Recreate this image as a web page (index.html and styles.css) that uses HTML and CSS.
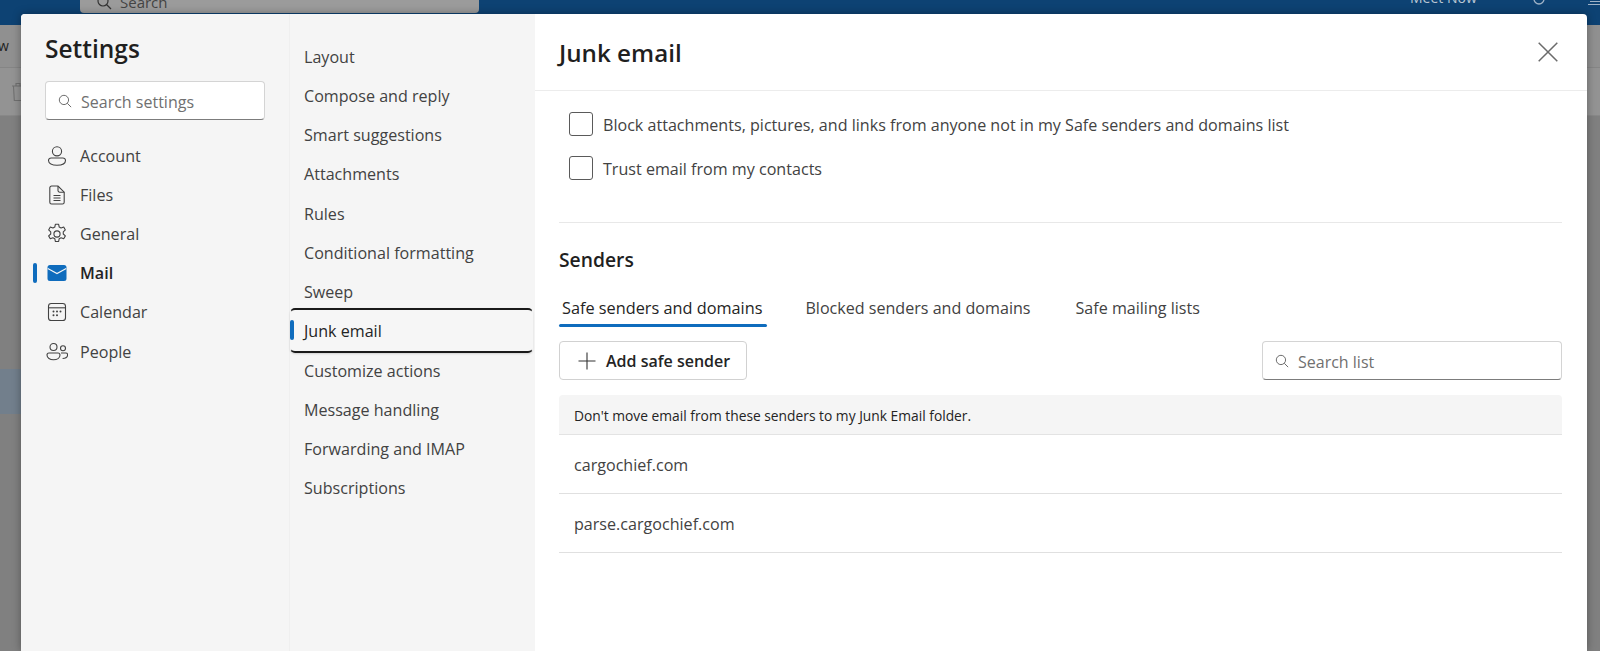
FILE: index.html
```html
<!DOCTYPE html>
<html lang="en">
<head>
<meta charset="utf-8">
<title>Settings</title>
<link rel="stylesheet" href="styles.css">
</head>
<body>
<div class="backdrop">
  <div class="topbar">
    <div class="appsearch"><svg class="ic16" viewBox="0 0 16 16"><circle cx="7" cy="6" r="5" fill="none" stroke="#333" stroke-width="1.2"/><path d="M10.500 9.500 15 14" stroke="#333" stroke-width="1.200"/></svg><span>Search</span></div>
    <span class="meetnow">Meet Now</span>
    <svg class="top-ring" viewBox="0 0 12 12"><circle cx="6" cy="-1" r="5" fill="none" stroke="#9fb2c6" stroke-width="1.300"/></svg>
    <svg class="top-edge" viewBox="0 0 13 6"><path d="M1 4.500h12M3 1.500h10" stroke="#9fb2c6" stroke-width="1.200" fill="none"/></svg>
  </div>
  <div class="ribbon"><span class="ribbon-v">w</span></div>
  <div class="toolrow"><svg class="trash" viewBox="0 0 14 20"><path d="M1 4h12M5 4V1.500h4V4M2.500 4l.8 14.500h7.400L11.500 4" fill="none" stroke="#707070" stroke-width="1.100"/></svg></div>
  <div class="backlist"><div class="selected-mail"></div></div>
</div>
<div class="dialog">
  <aside class="nav">
    <h1 class="nav-title">Settings</h1>
    <div class="search nav-search">
      <svg class="ic14" viewBox="0 0 16 16"><circle cx="6.800" cy="6.800" r="5.300" fill="none" stroke="#666" stroke-width="1.100"/><path d="M10.600 10.600 15 15" stroke="#666" stroke-width="1.100"/></svg>
      <span class="search-text">Search settings</span>
    </div>
    <ul class="nav-list">
      <li class="nav-item"><svg class="ic20" viewBox="0 0 20 20" fill="none" stroke="#424242" stroke-width="1.100"><circle cx="10" cy="5.300" r="4.600"/><path d="M4.200 12h11.600a2.600 2.600 0 0 1 2.700 2.600c0 2.900-3.600 4.700-8.500 4.700s-8.500-1.800-8.500-4.700A2.600 2.600 0 0 1 4.200 12z"/></svg>Account</li>
      <li class="nav-item"><svg class="ic20" viewBox="0 0 20 20" fill="none" stroke="#424242" stroke-width="1.100"><path d="M2.800 2.800A1.800 1.800 0 0 1 4.600 1H11l6.200 6.200v10A1.800 1.800 0 0 1 15.400 19H4.600a1.800 1.800 0 0 1-1.800-1.800z"/><path d="M11 1v4.500A1.700 1.700 0 0 0 12.700 7.200h4.500M6.500 10.500h7M6.500 13h7M6.500 15.500h7"/></svg>Files</li>
      <li class="nav-item"><svg class="ic20 ic-gear" viewBox="0 0 20 20" fill="none" stroke="#424242" stroke-width="1"><circle cx="10" cy="10" r="2.800"/><path d="M8.500 1.200h3l.5 2.500 1.700.9 2.400-.9 1.500 2.600-1.900 1.700v2l1.900 1.700-1.500 2.600-2.400-.9-1.700.9-.5 2.500h-3l-.5-2.500-1.700-.9-2.400.9-1.500-2.600 1.900-1.700V8L2.400 6.300l1.500-2.600 2.400.9L8 3.700z" stroke-linejoin="round"/></svg>General</li>
      <li class="nav-item nav-item-active"><span class="marker"></span><svg class="ic20" viewBox="0 0 20 20"><path d="M.5 4.500A2.500 2.500 0 0 1 3 2h14a2.500 2.500 0 0 1 2.500 2.500v11A2.500 2.500 0 0 1 17 18H3a2.500 2.500 0 0 1-2.500-2.500z" fill="#0f6cbd"/><path d="M.8 5.500 10 10.500l9.200-5" fill="none" stroke="#f5f5f5" stroke-width="1.100"/></svg>Mail</li>
      <li class="nav-item"><svg class="ic20" viewBox="0 0 20 20" fill="none" stroke="#424242" stroke-width="1.100"><rect x="1.500" y="1.500" width="17" height="17" rx="2.800"/><path d="M1.500 5.800h17"/><g fill="#424242" stroke="none"><circle cx="6.500" cy="9.500" r="1"/><circle cx="10" cy="9.500" r="1"/><circle cx="13.500" cy="9.500" r="1"/><circle cx="6.500" cy="13.200" r="1"/><circle cx="10" cy="13.200" r="1"/></g></svg>Calendar</li>
      <li class="nav-item"><svg class="ic20 ic-people" viewBox="0 0 22 20" fill="none" stroke="#424242" stroke-width="1.100"><circle cx="7.500" cy="5" r="3.500"/><circle cx="17" cy="6.300" r="2.500"/><path d="M3 11h9a2 2 0 0 1 2 2c0 3-3 4.800-6.500 4.800S1 16 1 13a2 2 0 0 1 2-2zM15 11h4.800a1.800 1.800 0 0 1 1.800 1.800c0 2.200-1.900 3.700-5 3.700"/></svg>People</li>
    </ul>
  </aside>
  <nav class="sub">
    <ul class="sub-list">
      <li class="sub-item">Layout</li>
      <li class="sub-item">Compose and reply</li>
      <li class="sub-item">Smart suggestions</li>
      <li class="sub-item">Attachments</li>
      <li class="sub-item">Rules</li>
      <li class="sub-item">Conditional formatting</li>
      <li class="sub-item">Sweep</li>
      <li class="sub-item sub-item-active"><span class="marker"></span>Junk email</li>
      <li class="sub-item">Customize actions</li>
      <li class="sub-item">Message handling</li>
      <li class="sub-item">Forwarding and IMAP</li>
      <li class="sub-item">Subscriptions</li>
    </ul>
  </nav>
  <main class="content">
    <header class="content-head">
      <h2 class="content-title">Junk email</h2>
      <svg class="close" viewBox="0 0 20 20"><path d="M.7.7 19.300 19.300M19.300.7.7 19.300" stroke="#6b6b6b" stroke-width="1.500" fill="none"/></svg>
    </header>
    <div class="content-body">
      <div class="checks">
        <label class="check"><span class="box"></span><span class="check-text">Block attachments, pictures, and links from anyone not in my Safe senders and domains list</span></label>
        <label class="check"><span class="box"></span><span class="check-text">Trust email from my contacts</span></label>
      </div>
      <h3 class="section-title">Senders</h3>
      <div class="tabs">
        <span class="tab tab-active">Safe senders and domains</span>
        <span class="tab">Blocked senders and domains</span>
        <span class="tab">Safe mailing lists</span>
      </div>
      <div class="actions">
        <button class="add-btn"><svg class="ic18" viewBox="0 0 18 18"><path d="M9 .5v17M.5 9h17" stroke="#333" stroke-width="1.100" fill="none"/></svg>Add safe sender</button>
        <div class="search list-search">
          <svg class="ic14" viewBox="0 0 16 16"><circle cx="6.800" cy="6.800" r="5.300" fill="none" stroke="#666" stroke-width="1.100"/><path d="M10.600 10.600 15 15" stroke="#666" stroke-width="1.100"/></svg>
          <span class="search-text">Search list</span>
        </div>
      </div>
      <div class="list-head">Don't move email from these senders to my Junk Email folder.</div>
      <div class="list-row">cargochief.com</div>
      <div class="list-row">parse.cargochief.com</div>
    </div>
  </main>
</div>
</body>
</html>
```
FILE: styles.css
```css
* { box-sizing: border-box; }
html, body { margin: 0; height: 100%; overflow: hidden; }
body { font-family: "Open Sans", "Noto Sans", sans-serif; background: #808080; color: #242424; }
ul { list-style: none; margin: 0; padding: 0; }
h1, h2, h3 { margin: 0; font-weight: 600; }

.backdrop { height: 651px; display: flex; flex-direction: column; }
.topbar { height: 25px; background: #0d4273; display: flex; align-items: flex-start; flex: none; position: relative; color: #b9c6d3; }
.appsearch { width: 399px; height: 13px; margin-left: 80px; background: #9b9b9b; border-radius: 0 0 4px 4px; display: flex; gap: 8px; padding-left: 16px; font-size: 15px; line-height: 1; color: #444; overflow: hidden; align-items: flex-end; }
.appsearch .ic16 { width: 16px; height: 16px; flex: none; margin-bottom: 2px; }
.appsearch span { margin-bottom: 3px; }
.meetnow { font-size: 14px; line-height: 1; position: absolute; left: 1410px; top: -9px; }
.top-ring { position: absolute; left: 1533px; top: 0; width: 12px; height: 12px; }
.top-edge { position: absolute; left: 1587px; top: 0; width: 13px; height: 6px; }
.ribbon { height: 43px; background: #909090; border-bottom: 1px solid #858585; flex: none; font-size: 14px; color: #222; padding-top: 11px; }
.ribbon-v { display: block; margin-left: -2px; }
.toolrow { height: 48px; background: #939393; border-bottom: 1px solid #888; flex: none; padding: 14px 0 0 11px; }
.trash { display: block; width: 14px; height: 20px; }
.backlist { flex: 1; background: #808080; padding-top: 253px; }
.selected-mail { height: 45px; width: 21px; background: #727f8c; }

.dialog { position: absolute; left: 21px; top: 14px; width: 1566px; height: 637px; background: #fff; border-radius: 4px 4px 0 0; display: flex; overflow: hidden; box-shadow: 0 0 8px rgba(0, 0, 0, .35); }

.nav { width: 269px; flex: none; background: #f5f5f5; border-right: 1px solid #efefef; padding: 18px 24px 0 24px; }
.nav-title { font-size: 24.500px; line-height: 34px; font-weight: 600; color: #1f1f1f; }
.search { display: flex; align-items: center; background: #fff; border: 1px solid #d4d4d4; border-bottom-color: #7c7c7c; border-radius: 4px; color: #707070; font-size: 16px; }
.search-text { margin-top: 2px; }
.nav-search { width: 220px; height: 39px; margin-top: 15px; padding-left: 12px; gap: 9px; }
.ic14 { width: 14px; height: 14px; flex: none; }
.nav-list { margin-top: 16px; }
.nav-item { position: relative; height: 39.200px; display: flex; align-items: center; gap: 13px; font-size: 16.100px; color: #424242; padding-left: 2px; }
.ic20 { width: 20px; height: 20px; flex: none; }
.ic-gear { width: 22px; height: 22px; margin: 0 -1px; }
.ic-people { width: 22px; margin: 0 -1px; }
.nav-item-active { font-weight: 600; color: #242424; }
.marker { position: absolute; width: 4px; height: 20px; background: #0f6cbd; border-radius: 2px; }
.nav-item-active .marker { left: -12px; top: 9px; }

.sub { width: 245px; flex: none; background: #f5f5f5; padding-top: 23px; }
.sub-item { position: relative; height: 39.250px; display: flex; align-items: center; padding-left: 14px; font-size: 16.100px; color: #424242; white-space: nowrap; }
.sub-item-active { height: 45.250px; margin: -4px 0 -2px; padding-top: 2px; width: 243px; padding-left: 13px; color: #242424; border-radius: 5px; border: 2px solid #1a1a1a; border-left: 1px solid transparent; border-right: 1px solid transparent; background: #f6f6f6; box-shadow: 0 1px 2px rgba(0, 0, 0, .15); }
.sub-item-active .marker { left: -1px; top: 10px; }

.content { flex: 1; min-width: 0; display: flex; flex-direction: column; }
.content-head { height: 77px; border-bottom: 1px solid #ececec; display: flex; align-items: center; justify-content: space-between; padding: 0 29px 0 24px; flex: none; }
.content-title { font-size: 24.200px; line-height: 32px; color: #1f1f1f; margin-top: 1px; }
.close { width: 20px; height: 20px; flex: none; margin-bottom: 1px; }
.content-body { padding: 0 25px 0 24px; }
.checks { height: 132px; border-bottom: 1px solid #e8e8e8; padding: 21px 0 0 10px; display: flex; flex-direction: column; gap: 20px; }
.check { display: flex; align-items: center; gap: 10px; height: 24px; font-size: 16.100px; color: #424242; white-space: nowrap; }
.check-text { margin-top: 2px; }
.box { width: 24px; height: 24px; border: 1px solid #5a5a5a; border-radius: 3px; background: #fff; flex: none; }
.section-title { font-size: 19.300px; line-height: 26px; margin-top: 24px; color: #1f1f1f; }
.tabs { display: flex; gap: 41px; margin-top: 20px; height: 36px; }
.tab { position: relative; padding: 1px 2px 0; font-size: 16.100px; line-height: 28px; color: #424242; white-space: nowrap; }
.tab-active { color: #242424; font-weight: 500; padding: 1px 5px 0 3px; margin-right: -5px; font-size: 16.300px; }
.tab-active::after { content: ""; position: absolute; left: 0; right: 0; bottom: 2px; height: 3px; border-radius: 2px; background: #0f6cbd; }
.actions { display: flex; justify-content: space-between; margin-top: 12px; }
.add-btn { display: flex; align-items: center; gap: 10px; width: 188px; height: 39px; background: #fff; border: 1px solid #d1d1d1; border-radius: 4px; padding: 0 0 0 18px; font: 600 16px "Open Sans", "Noto Sans", sans-serif; color: #242424; white-space: nowrap; }
.ic18 { width: 18px; height: 18px; flex: none; }
.list-search { width: 300px; height: 39px; padding-left: 12px; gap: 9px; }
.list-head { margin-top: 15px; height: 40px; background: #f5f5f5; border-bottom: 1px solid #e3e3e3; border-radius: 4px 4px 0 0; display: flex; align-items: center; padding: 2px 0 0 15px; font-size: 13.800px; color: #242424; }
.list-row { height: 59px; border-bottom: 1px solid #e0e0e0; display: flex; align-items: center; padding: 2px 0 0 15px; font-size: 16.100px; color: #424242; }
```
